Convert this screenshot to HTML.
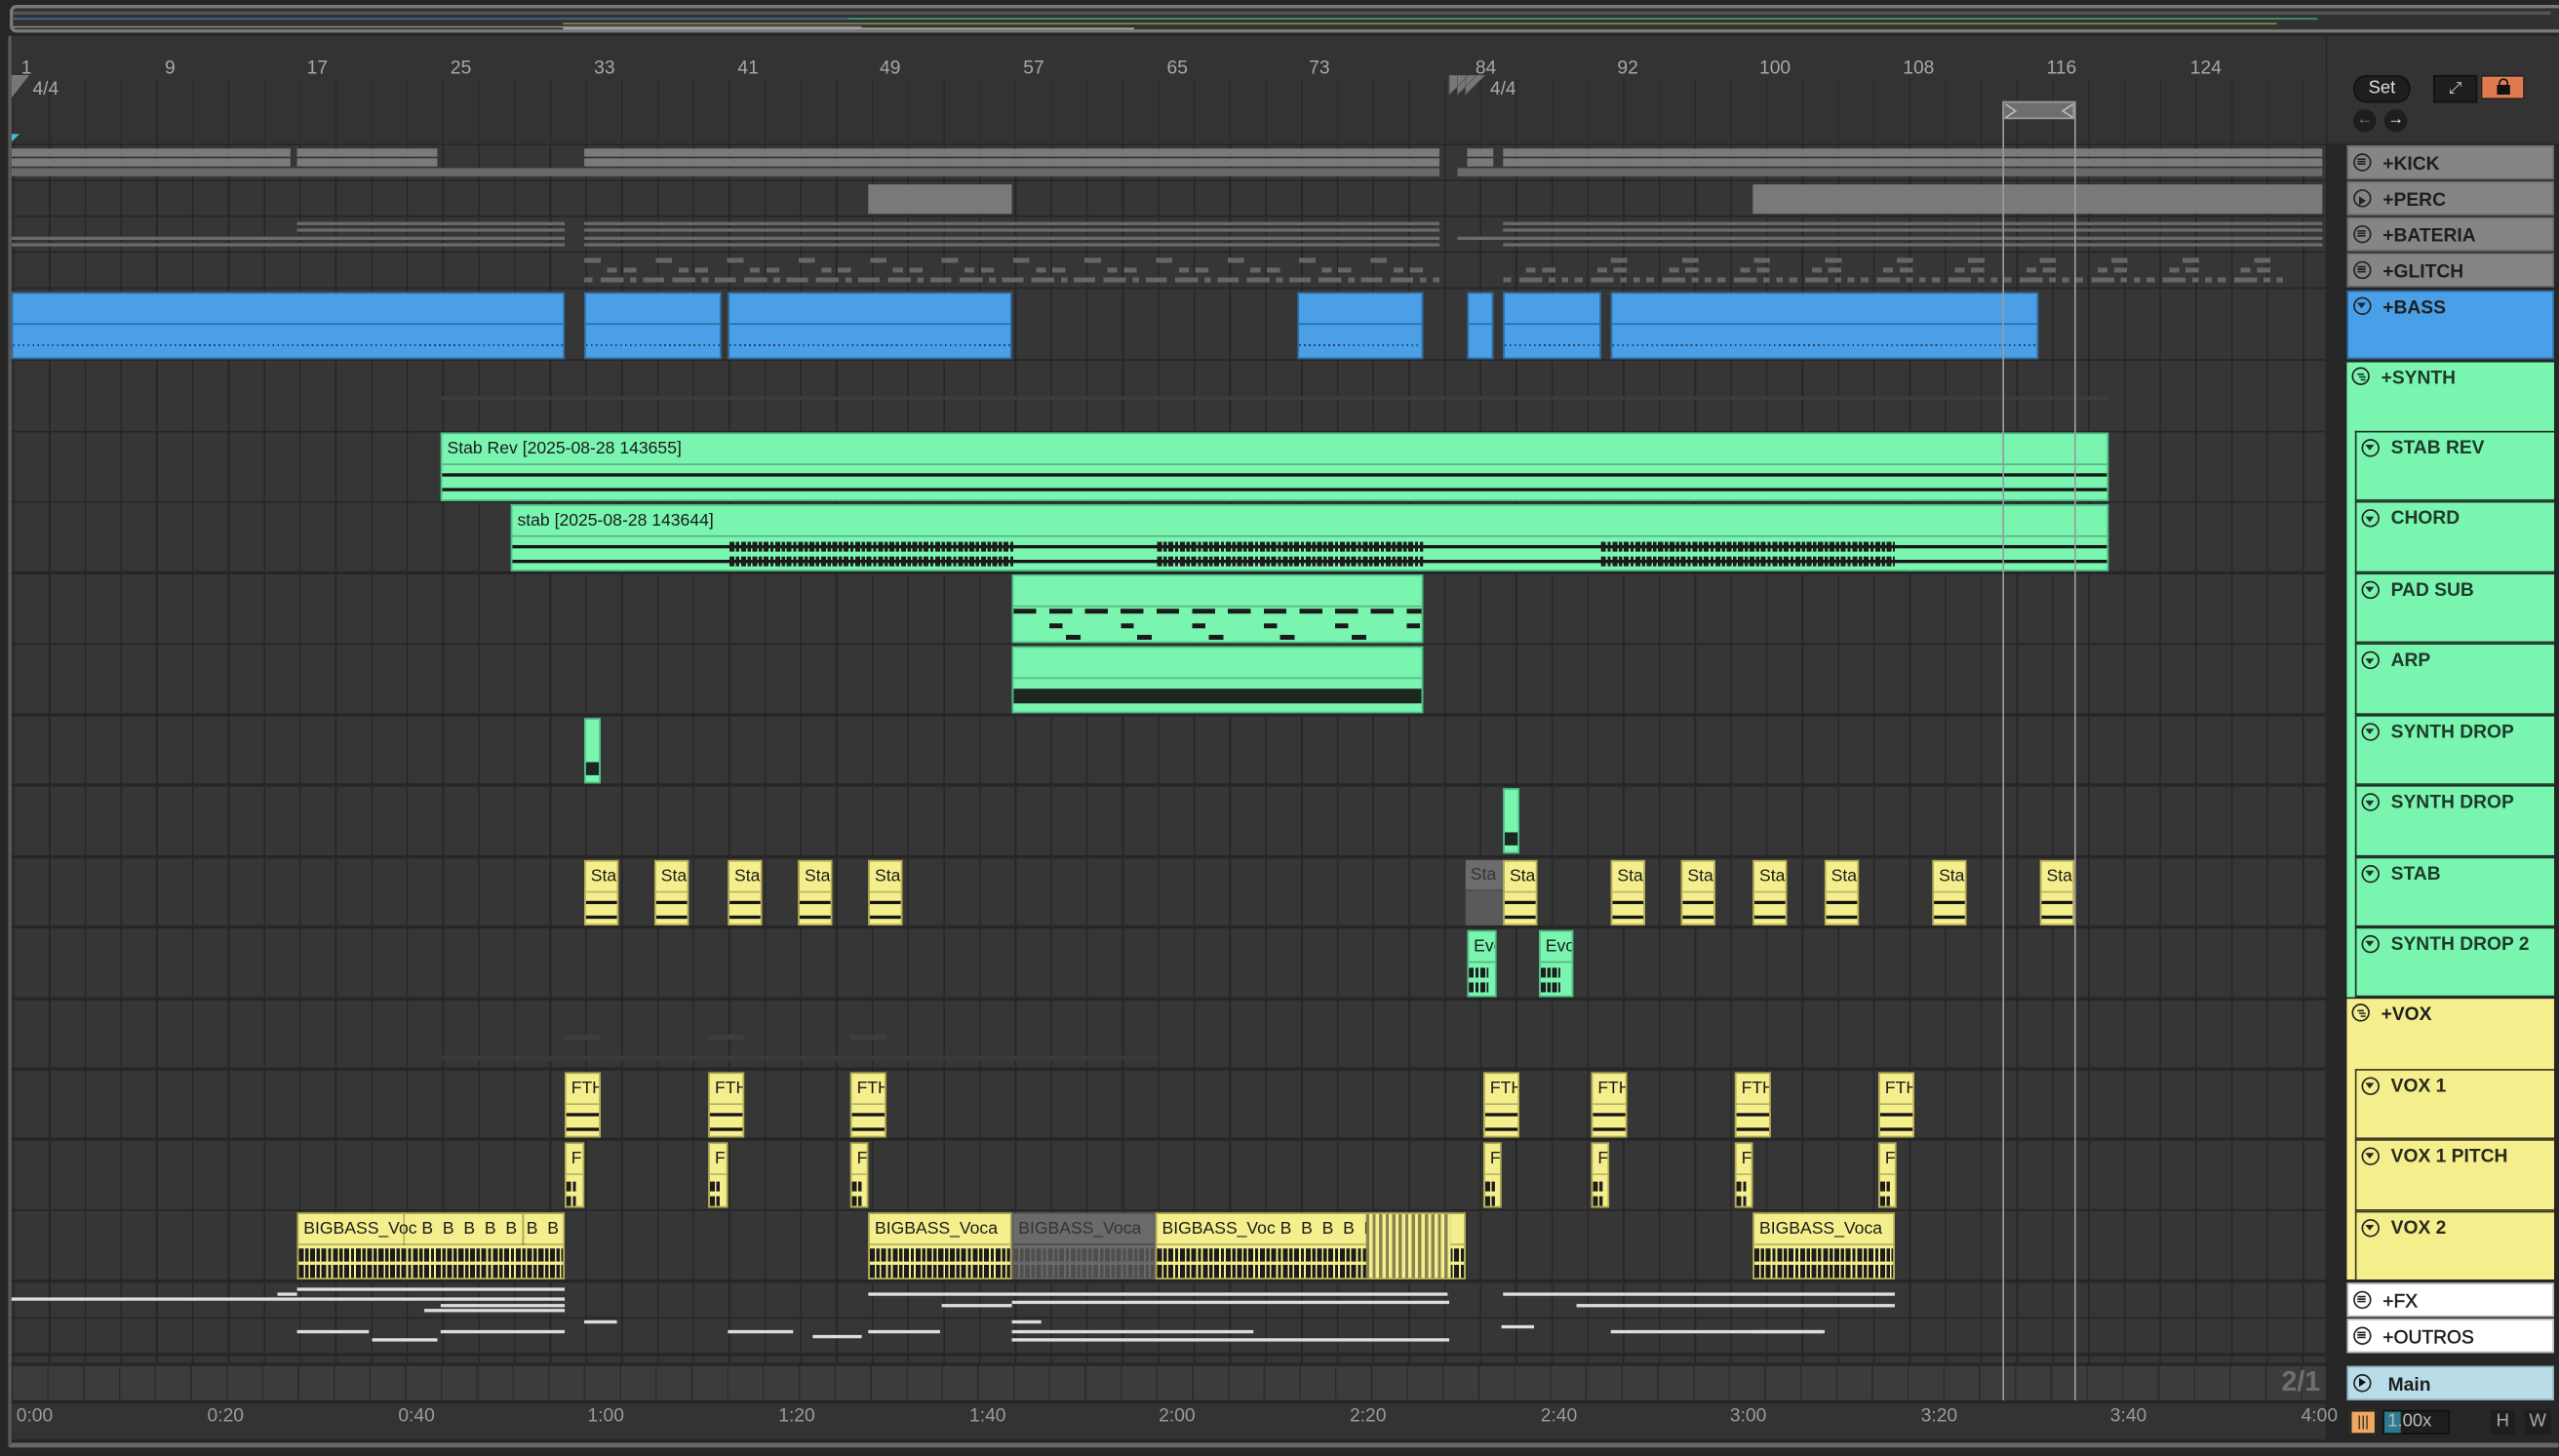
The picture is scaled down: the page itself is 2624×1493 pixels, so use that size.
<!DOCTYPE html>
<html><head><meta charset="utf-8"><style>
html,body{margin:0;padding:0;background:#262626;width:2624px;height:1492px;overflow:hidden;font-family:"Liberation Sans",sans-serif}
.s{position:absolute;left:0;top:0;width:1568px;height:892px;transform:scale(1.67347);transform-origin:0 0;background:#262626}
.a{position:absolute}
.L{position:absolute;left:7px;width:1418px;background:repeating-linear-gradient(90deg,#272727 0 1px,#363636 1px 21.92px);background-position:1px 0}
.c{position:absolute;box-sizing:border-box;overflow:hidden}
.g{background:#7af5b0;border:1px solid #4cbf88}
.y{background:#f4ef8c;border:1px solid #b3ac52}
.gy{background:#6a6a6a;border:1px solid #5a5a5a}
.b{background:#4a9fe6;border:1px solid #2e6ea5}
.h{height:18px;border-bottom:1px solid rgba(0,0,0,.25);font-size:10.5px;padding-left:3px;line-height:19px;white-space:nowrap;color:#1a1a1a}
.ln{position:absolute;left:0;right:0;height:1.5px;background:#151515}
.wv{position:absolute;left:0;right:0;height:6px;background:repeating-linear-gradient(90deg,#1c1c1c 0 3px,transparent 3px 4px,#1c1c1c 4px 6px,transparent 6px 7px)}
.k{position:absolute;background:#7a7a7a}
.w{position:absolute;height:1.5px;background:#ddd}
.hd{position:absolute;left:1438px;width:127px;box-sizing:border-box;font-weight:bold;font-size:11.5px;color:#1e1e1e;padding-left:21px;line-height:22px}
.ic{position:absolute;left:3px;top:4px;width:11px;height:11px;border:1.3px solid #222;border-radius:50%;box-sizing:border-box}
.sub{position:absolute;left:1443px;width:122px;box-sizing:border-box;border:1.5px solid #1f2f25;border-right:none;background:#7af5b0;font-weight:bold;font-size:11.5px;color:#1f3a2a;padding-left:21px;line-height:21px}
.ry{position:absolute;top:36px;font-size:11.5px;color:#a8a8a8}
.ty{position:absolute;top:862px;font-size:11.5px;color:#9a9a9a}
</style></head><body><div class="s">

<div class="a" style="left:6px;top:3px;width:1562px;height:17px;border:2px solid #7a7a7a;border-right:none;border-radius:4px 0 0 4px;background:#323232;box-sizing:border-box"></div>
<div class="a" style="left:8px;top:7px;width:1555px;height:2px;background:#555"></div>
<div class="a" style="left:8px;top:11px;width:520px;height:1px;background:#3c6f9a"></div>
<div class="a" style="left:520px;top:11px;width:900px;height:1px;background:#3aa07a"></div>
<div class="a" style="left:345px;top:14px;width:1050px;height:1px;background:#8c8a4a"></div>
<div class="a" style="left:8px;top:16px;width:520px;height:1px;background:#888"></div>
<div class="a" style="left:345px;top:17px;width:350px;height:1px;background:#aaa"></div>

<div class="a" style="left:7px;top:22px;width:1418px;height:66px;background:#333"></div>
<div class="a" style="left:7px;top:48px;width:1418px;height:40px;background:repeating-linear-gradient(90deg,#2a2a2a 0 1px,#333 1px 21.92px);background-position:1px 0"></div>
<div class="ry" style="left:13px">1</div><div class="ry" style="left:101px">9</div><div class="ry" style="left:188px">17</div><div class="ry" style="left:276px">25</div><div class="ry" style="left:364px">33</div><div class="ry" style="left:452px">41</div><div class="ry" style="left:539px">49</div><div class="ry" style="left:627px">57</div><div class="ry" style="left:715px">65</div><div class="ry" style="left:802px">73</div><div class="ry" style="left:904px">84</div><div class="ry" style="left:991px">92</div><div class="ry" style="left:1078px">100</div><div class="ry" style="left:1166px">108</div><div class="ry" style="left:1254px">116</div><div class="ry" style="left:1342px">124</div>
<div class="a" style="left:20px;top:49px;font-size:11.5px;color:#a8a8a8">4/4</div>
<div class="a" style="left:913px;top:49px;font-size:11.5px;color:#a8a8a8">4/4</div>
<svg class="a" style="left:6px;top:46px" width="14" height="16"><path d="M1 0H12L1 14Z" fill="#777"/></svg>
<svg class="a" style="left:884px;top:46px" width="30" height="16"><path d="M4 0H16L4 12ZM9 0H21L9 12ZM14 0H26L14 12Z" fill="#777" stroke="#555" stroke-width=".5"/></svg>
<svg class="a" style="left:7px;top:82px" width="6" height="6"><path d="M0 0H5L0 5Z" fill="#4ab8d8"/></svg>
<div class="a" style="left:1227px;top:62px;width:44px;height:11px;background:#6e6e6e;border:1px solid #999;box-sizing:border-box"></div>
<svg class="a" style="left:1228px;top:63px" width="43" height="10"><path d="M1 1L7 5L1 9M42 1L36 5L42 9" fill="none" stroke="#bbb" stroke-width="1"/></svg>

<div class="L" style="top:89px;height:21px"></div>
<div class="L" style="top:111px;height:21px"></div>
<div class="L" style="top:133px;height:21px"></div>
<div class="L" style="top:155px;height:21px"></div>
<div class="L" style="top:177px;height:43px"></div>
<div class="L" style="top:221px;height:43px"></div>
<div class="L" style="top:265px;height:42px"></div>
<div class="L" style="top:308px;height:42px"></div>
<div class="L" style="top:352px;height:42px"></div>
<div class="L" style="top:395px;height:42px"></div>
<div class="L" style="top:439px;height:41px"></div>
<div class="L" style="top:482px;height:42px"></div>
<div class="L" style="top:526px;height:41px"></div>
<div class="L" style="top:569px;height:42px"></div>
<div class="L" style="top:613px;height:41px"></div>
<div class="L" style="top:656px;height:41px"></div>
<div class="L" style="top:699px;height:42px"></div>
<div class="L" style="top:742px;height:42px"></div>
<div class="L" style="top:786px;height:21px"></div>
<div class="L" style="top:808px;height:21px"></div>
<div class="L" style="top:831px;height:4px"></div>
<div class="L" style="top:837px;height:21px;background:repeating-linear-gradient(90deg,#2e2e2e 0 1px,#3c3c3c 1px 21.92px)"></div>
<div class="a" style="left:1398px;top:837px;font-size:17px;font-weight:bold;color:#6f6f6f">2/1</div>

<div class="k" style="left:7px;top:91px;width:171px;height:5px"></div><div class="k" style="left:7px;top:97px;width:171px;height:5px"></div>
<div class="k" style="left:182px;top:91px;width:86px;height:5px"></div><div class="k" style="left:182px;top:97px;width:86px;height:5px"></div>
<div class="k" style="left:7px;top:103px;width:875px;height:5px;background:#6a6a6a"></div>
<div class="k" style="left:358px;top:91px;width:524px;height:5px"></div><div class="k" style="left:358px;top:97px;width:524px;height:5px"></div>
<div class="k" style="left:899px;top:91px;width:16px;height:5px"></div><div class="k" style="left:899px;top:97px;width:16px;height:5px"></div>
<div class="k" style="left:893px;top:103px;width:530px;height:5px;background:#6a6a6a"></div>
<div class="k" style="left:921px;top:91px;width:502px;height:5px"></div><div class="k" style="left:921px;top:97px;width:502px;height:5px"></div>
<div class="k" style="left:532px;top:113px;width:88px;height:18px"></div>
<div class="k" style="left:1074px;top:113px;width:349px;height:18px"></div>
<div class="k" style="left:182px;top:136px;width:164px;height:2px;background:#6a6a6a"></div><div class="k" style="left:182px;top:140px;width:164px;height:2px;background:#6a6a6a"></div>
<div class="k" style="left:7px;top:145px;width:339px;height:2px;background:#6a6a6a"></div><div class="k" style="left:7px;top:149px;width:339px;height:2px;background:#6a6a6a"></div>
<div class="k" style="left:358px;top:136px;width:524px;height:2px;background:#6a6a6a"></div><div class="k" style="left:358px;top:140px;width:524px;height:2px;background:#6a6a6a"></div>
<div class="k" style="left:358px;top:145px;width:524px;height:2px;background:#6a6a6a"></div><div class="k" style="left:358px;top:149px;width:524px;height:2px;background:#6a6a6a"></div>
<div class="k" style="left:921px;top:136px;width:502px;height:2px;background:#6a6a6a"></div><div class="k" style="left:921px;top:140px;width:502px;height:2px;background:#6a6a6a"></div>
<div class="k" style="left:893px;top:145px;width:530px;height:2px;background:#6a6a6a"></div><div class="k" style="left:921px;top:149px;width:502px;height:2px;background:#6a6a6a"></div>
<div class="k" style="left:358px;top:158px;width:524px;height:3px;background:repeating-linear-gradient(90deg,#666 0 10px,transparent 10px 43.8px)"></div>
<div class="k" style="left:372px;top:164px;width:510px;height:3px;background:repeating-linear-gradient(90deg,#666 0 6px,transparent 6px 10px,#666 10px 18px,transparent 18px 43.8px)"></div>
<div class="k" style="left:358px;top:170px;width:524px;height:3px;background:repeating-linear-gradient(90deg,#666 0 5px,transparent 5px 10px,#666 10px 24px,transparent 24px 28px,#666 28px 32px,transparent 32px 36px,#666 36px 44px,transparent 44px 43.8px)"></div>
<div class="k" style="left:987px;top:158px;width:436px;height:3px;background:repeating-linear-gradient(90deg,#666 0 10px,transparent 10px 43.8px)"></div>
<div class="k" style="left:935px;top:164px;width:460px;height:3px;background:repeating-linear-gradient(90deg,#666 0 6px,transparent 6px 10px,#666 10px 18px,transparent 18px 43.8px)"></div>
<div class="k" style="left:921px;top:170px;width:480px;height:3px;background:repeating-linear-gradient(90deg,#666 0 5px,transparent 5px 10px,#666 10px 24px,transparent 24px 28px,#666 28px 32px,transparent 32px 36px,#666 36px 40px,transparent 40px 43.8px)"></div>

<div class="c b" style="left:7px;top:179px;width:339px;height:41px"><div class="a" style="left:0;right:0;top:18px;height:1px;background:#2e6ea5"></div><div class="a" style="left:0;right:0;top:31px;height:1px;background:repeating-linear-gradient(90deg,#1b3550 0 1px,transparent 1px 3px)"></div></div>
<div class="c b" style="left:358px;top:179px;width:84px;height:41px"><div class="a" style="left:0;right:0;top:18px;height:1px;background:#2e6ea5"></div><div class="a" style="left:0;right:0;top:31px;height:1px;background:repeating-linear-gradient(90deg,#1b3550 0 1px,transparent 1px 3px)"></div></div>
<div class="c b" style="left:446px;top:179px;width:174px;height:41px"><div class="a" style="left:0;right:0;top:18px;height:1px;background:#2e6ea5"></div><div class="a" style="left:0;right:0;top:31px;height:1px;background:repeating-linear-gradient(90deg,#1b3550 0 1px,transparent 1px 3px)"></div></div>
<div class="c b" style="left:795px;top:179px;width:77px;height:41px"><div class="a" style="left:0;right:0;top:18px;height:1px;background:#2e6ea5"></div><div class="a" style="left:0;right:0;top:31px;height:1px;background:repeating-linear-gradient(90deg,#1b3550 0 1px,transparent 1px 3px)"></div></div>
<div class="c b" style="left:899px;top:179px;width:16px;height:41px"><div class="a" style="left:0;right:0;top:18px;height:1px;background:#2e6ea5"></div></div>
<div class="c b" style="left:921px;top:179px;width:60px;height:41px"><div class="a" style="left:0;right:0;top:18px;height:1px;background:#2e6ea5"></div><div class="a" style="left:0;right:0;top:31px;height:1px;background:repeating-linear-gradient(90deg,#1b3550 0 1px,transparent 1px 3px)"></div></div>
<div class="c b" style="left:987px;top:179px;width:262px;height:41px"><div class="a" style="left:0;right:0;top:18px;height:1px;background:#2e6ea5"></div><div class="a" style="left:0;right:0;top:31px;height:1px;background:repeating-linear-gradient(90deg,#1b3550 0 1px,transparent 1px 3px)"></div></div>

<div class="a" style="left:270px;top:243px;width:1022px;height:2px;background:#3d3d3d"></div>

<div class="c g" style="left:270px;top:265px;width:1022px;height:42px"><div class="h">Stab Rev [2025-08-28 143655]</div><i class="ln" style="top:24px"></i><i class="ln" style="top:33px"></i></div>
<div class="c g" style="left:313px;top:309px;width:979px;height:41px"><div class="h">stab [2025-08-28 143644]</div><i class="ln" style="top:24px"></i><i class="ln" style="top:33px"></i>
<i class="wv" style="left:133px;right:auto;width:174px;top:22px"></i><i class="wv" style="left:133px;right:auto;width:174px;top:31px"></i>
<i class="wv" style="left:395px;right:auto;width:163px;top:22px"></i><i class="wv" style="left:395px;right:auto;width:163px;top:31px"></i>
<i class="wv" style="left:667px;right:auto;width:180px;top:22px"></i><i class="wv" style="left:667px;right:auto;width:180px;top:31px"></i></div>
<div class="c g" style="left:620px;top:352px;width:252px;height:42px"><div class="h"></div>
<div class="a" style="left:0;top:20px;width:252px;height:3px;background:repeating-linear-gradient(90deg,#1a1a1a 0 14px,transparent 14px 21.9px)"></div>
<div class="a" style="left:22px;top:29px;width:230px;height:3px;background:repeating-linear-gradient(90deg,#1a1a1a 0 8px,transparent 8px 43.8px)"></div>
<div class="a" style="left:32px;top:36px;width:220px;height:3px;background:repeating-linear-gradient(90deg,#1a1a1a 0 9px,transparent 9px 43.8px)"></div></div>
<div class="c g" style="left:620px;top:396px;width:252px;height:41px"><div class="h"></div><div class="a" style="left:0;right:0;top:25px;height:9px;background:#1c2720"></div></div>
<div class="c g" style="left:358px;top:440px;width:10px;height:40px"><div class="a" style="left:0;right:0;top:26px;height:8px;background:#1c2720"></div></div>
<div class="c g" style="left:921px;top:483px;width:10px;height:40px"><div class="a" style="left:0;right:0;top:26px;height:8px;background:#1c2720"></div></div>

<div class="c y" style="left:358px;top:527px;width:21px;height:40px"><div class="h">Sta</div><i class="ln" style="top:24px"></i><i class="ln" style="top:33px"></i></div>
<div class="c y" style="left:401px;top:527px;width:21px;height:40px"><div class="h">Sta</div><i class="ln" style="top:24px"></i><i class="ln" style="top:33px"></i></div>
<div class="c y" style="left:446px;top:527px;width:21px;height:40px"><div class="h">Sta</div><i class="ln" style="top:24px"></i><i class="ln" style="top:33px"></i></div>
<div class="c y" style="left:489px;top:527px;width:21px;height:40px"><div class="h">Sta</div><i class="ln" style="top:24px"></i><i class="ln" style="top:33px"></i></div>
<div class="c y" style="left:532px;top:527px;width:21px;height:40px"><div class="h">Sta</div><i class="ln" style="top:24px"></i><i class="ln" style="top:33px"></i></div>
<div class="c" style="left:898px;top:527px;width:23px;height:40px;background:#5a5a5a"><div class="h" style="background:#6c6c6c;color:#333">Sta</div></div>
<div class="c y" style="left:921px;top:527px;width:21px;height:40px"><div class="h">Sta</div><i class="ln" style="top:24px"></i><i class="ln" style="top:33px"></i></div>
<div class="c y" style="left:987px;top:527px;width:21px;height:40px"><div class="h">Sta</div><i class="ln" style="top:24px"></i><i class="ln" style="top:33px"></i></div>
<div class="c y" style="left:1030px;top:527px;width:21px;height:40px"><div class="h">Sta</div><i class="ln" style="top:24px"></i><i class="ln" style="top:33px"></i></div>
<div class="c y" style="left:1074px;top:527px;width:21px;height:40px"><div class="h">Sta</div><i class="ln" style="top:24px"></i><i class="ln" style="top:33px"></i></div>
<div class="c y" style="left:1118px;top:527px;width:21px;height:40px"><div class="h">Sta</div><i class="ln" style="top:24px"></i><i class="ln" style="top:33px"></i></div>
<div class="c y" style="left:1184px;top:527px;width:21px;height:40px"><div class="h">Sta</div><i class="ln" style="top:24px"></i><i class="ln" style="top:33px"></i></div>
<div class="c y" style="left:1250px;top:527px;width:21px;height:40px"><div class="h">Sta</div><i class="ln" style="top:24px"></i><i class="ln" style="top:33px"></i></div>
<div class="c g" style="left:899px;top:570px;width:18px;height:41px"><div class="h">Evo</div><i class="wv" style="top:22px;width:12px"></i><i class="wv" style="top:31px;width:12px"></i></div>
<div class="c g" style="left:943px;top:570px;width:21px;height:41px"><div class="h">Evo</div><i class="wv" style="top:22px;width:12px"></i><i class="wv" style="top:31px;width:12px"></i></div>
<div class="a" style="left:346px;top:634px;width:22px;height:3px;background:#3e3e3e"></div><div class="a" style="left:434px;top:634px;width:22px;height:3px;background:#3e3e3e"></div><div class="a" style="left:521px;top:634px;width:22px;height:3px;background:#3e3e3e"></div>
<div class="a" style="left:270px;top:647px;width:440px;height:3px;background:#3a3a3a"></div>

<div class="c y" style="left:346px;top:657px;width:22px;height:40px"><div class="h">FTH</div><i class="ln" style="top:24px"></i><i class="ln" style="top:33px"></i></div>
<div class="c y" style="left:434px;top:657px;width:22px;height:40px"><div class="h">FTH</div><i class="ln" style="top:24px"></i><i class="ln" style="top:33px"></i></div>
<div class="c y" style="left:521px;top:657px;width:22px;height:40px"><div class="h">FTH</div><i class="ln" style="top:24px"></i><i class="ln" style="top:33px"></i></div>
<div class="c y" style="left:909px;top:657px;width:22px;height:40px"><div class="h">FTH</div><i class="ln" style="top:24px"></i><i class="ln" style="top:33px"></i></div>
<div class="c y" style="left:975px;top:657px;width:22px;height:40px"><div class="h">FTH</div><i class="ln" style="top:24px"></i><i class="ln" style="top:33px"></i></div>
<div class="c y" style="left:1063px;top:657px;width:22px;height:40px"><div class="h">FTH</div><i class="ln" style="top:24px"></i><i class="ln" style="top:33px"></i></div>
<div class="c y" style="left:1151px;top:657px;width:22px;height:40px"><div class="h">FTH</div><i class="ln" style="top:24px"></i><i class="ln" style="top:33px"></i></div>
<div class="c y" style="left:346px;top:700px;width:12px;height:40px"><div class="h">F</div><i class="wv" style="top:23px;width:6px"></i><i class="wv" style="top:32px;width:6px"></i></div>
<div class="c y" style="left:434px;top:700px;width:12px;height:40px"><div class="h">F</div><i class="wv" style="top:23px;width:6px"></i><i class="wv" style="top:32px;width:6px"></i></div>
<div class="c y" style="left:521px;top:700px;width:11px;height:40px"><div class="h">F</div><i class="wv" style="top:23px;width:6px"></i><i class="wv" style="top:32px;width:6px"></i></div>
<div class="c y" style="left:909px;top:700px;width:11px;height:40px"><div class="h">F</div><i class="wv" style="top:23px;width:6px"></i><i class="wv" style="top:32px;width:6px"></i></div>
<div class="c y" style="left:975px;top:700px;width:11px;height:40px"><div class="h">F</div><i class="wv" style="top:23px;width:6px"></i><i class="wv" style="top:32px;width:6px"></i></div>
<div class="c y" style="left:1063px;top:700px;width:11px;height:40px"><div class="h">F</div><i class="wv" style="top:23px;width:6px"></i><i class="wv" style="top:32px;width:6px"></i></div>
<div class="c y" style="left:1151px;top:700px;width:11px;height:40px"><div class="h">F</div><i class="wv" style="top:23px;width:6px"></i><i class="wv" style="top:32px;width:6px"></i></div>
<div class="c y" style="left:182px;top:743px;width:164px;height:41px"><div class="h" style="background:repeating-linear-gradient(90deg,transparent 0 64px,#b3ac52 64px 65px,transparent 65px 73px)">BIGBASS_Voc&nbsp;B&nbsp; B&nbsp; B&nbsp; B&nbsp; B&nbsp; B&nbsp; B&nbsp; B</div><i class="wv" style="top:21px;height:8px"></i><i class="wv" style="top:31px;height:8px"></i></div>
<div class="c y" style="left:532px;top:743px;width:88px;height:41px"><div class="h">BIGBASS_Voca</div><i class="wv" style="top:21px;height:8px"></i><i class="wv" style="top:31px;height:8px"></i></div>
<div class="c gy" style="left:620px;top:743px;width:88px;height:41px"><div class="h" style="color:#333">BIGBASS_Voca</div><i class="wv" style="top:21px;height:8px;opacity:.35"></i><i class="wv" style="top:31px;height:8px;opacity:.35"></i></div>
<div class="c y" style="left:708px;top:743px;width:190px;height:41px"><div class="h">BIGBASS_Voc&nbsp;B&nbsp; B&nbsp; B&nbsp; B&nbsp; B</div><i class="wv" style="top:21px;height:8px"></i><i class="wv" style="top:31px;height:8px"></i>
<div class="a" style="left:128px;top:0;width:52px;height:41px;background:repeating-linear-gradient(90deg,#8a8550 0 2px,#f4ef8c 2px 4px)"></div></div>
<div class="c y" style="left:1074px;top:743px;width:87px;height:41px"><div class="h">BIGBASS_Voca</div><i class="wv" style="top:21px;height:8px"></i><i class="wv" style="top:31px;height:8px"></i></div>

<div class="w" style="left:182px;top:789px;width:164px"></div>
<div class="w" style="left:7px;top:795px;width:339px"></div>
<div class="w" style="left:170px;top:792px;width:12px"></div>
<div class="w" style="left:270px;top:799px;width:76px"></div>
<div class="w" style="left:260px;top:802px;width:86px"></div>
<div class="w" style="left:532px;top:792px;width:355px"></div>
<div class="w" style="left:620px;top:797px;width:268px"></div>
<div class="w" style="left:577px;top:799px;width:43px"></div>
<div class="w" style="left:921px;top:792px;width:240px"></div>
<div class="w" style="left:966px;top:799px;width:195px"></div>
<div class="w" style="left:182px;top:815px;width:44px"></div>
<div class="w" style="left:270px;top:815px;width:76px"></div>
<div class="w" style="left:228px;top:820px;width:40px"></div>
<div class="w" style="left:358px;top:809px;width:20px"></div>
<div class="w" style="left:446px;top:815px;width:40px"></div>
<div class="w" style="left:498px;top:818px;width:30px"></div>
<div class="w" style="left:532px;top:815px;width:44px"></div>
<div class="w" style="left:620px;top:809px;width:18px"></div>
<div class="w" style="left:620px;top:815px;width:90px"></div>
<div class="w" style="left:620px;top:820px;width:268px"></div>
<div class="w" style="left:708px;top:815px;width:60px"></div>
<div class="w" style="left:920px;top:812px;width:20px"></div>
<div class="w" style="left:987px;top:815px;width:130px"></div>
<div class="w" style="left:1074px;top:815px;width:44px"></div>

<div class="a" style="left:1227px;top:62px;width:1px;height:796px;background:#9a9a9a"></div>
<div class="a" style="left:1271px;top:62px;width:1px;height:796px;background:#9a9a9a"></div>

<div class="a" style="left:7px;top:860px;width:1418px;height:22px;background:#333"></div>
<div class="ty" style="left:10px">0:00</div><div class="ty" style="left:127px">0:20</div><div class="ty" style="left:244px">0:40</div><div class="ty" style="left:360px">1:00</div><div class="ty" style="left:477px">1:20</div><div class="ty" style="left:594px">1:40</div><div class="ty" style="left:710px">2:00</div><div class="ty" style="left:827px">2:20</div><div class="ty" style="left:944px">2:40</div><div class="ty" style="left:1060px">3:00</div><div class="ty" style="left:1177px">3:20</div><div class="ty" style="left:1293px">3:40</div><div class="ty" style="left:1410px">4:00</div>
<div class="a" style="left:5px;top:884px;width:1563px;height:3px;background:#666;border-radius:2px"></div>
<div class="a" style="left:5px;top:22px;width:2px;height:864px;background:#5a5a5a"></div>

<div class="a" style="left:1426px;top:22px;width:142px;height:66px;background:#333"></div>
<div class="a" style="left:1442px;top:46px;width:33px;height:15px;border-radius:8px;background:#1e1e1e;border:1px solid #111;color:#ddd;font-size:11px;text-align:center;line-height:15px">Set</div>
<div class="a" style="left:1491px;top:46px;width:25px;height:15px;background:#1e1e1e;border:1px solid #111;color:#ddd;font-size:10px;text-align:center;line-height:15px">⤢</div>
<div class="a" style="left:1520px;top:46px;width:27px;height:15px;background:#e07a50;border:1px solid #222;box-sizing:border-box"><div class="a" style="left:9px;top:5px;width:8px;height:6px;background:#111"></div><div class="a" style="left:10px;top:1px;width:4px;height:5px;border:1.5px solid #111;border-bottom:none;border-radius:3px 3px 0 0"></div></div>
<div class="a" style="left:1442px;top:67px;width:14px;height:14px;border-radius:50%;background:#1e1e1e;color:#777;font-size:10px;text-align:center;line-height:14px">←</div>
<div class="a" style="left:1461px;top:67px;width:14px;height:14px;border-radius:50%;background:#1e1e1e;color:#eee;font-size:10px;text-align:center;line-height:14px">→</div>

<div class="hd" style="top:89px;height:21px;background:#858585;border:1px solid #6b6b6b"><div class="ic"></div>+KICK</div>
<div class="hd" style="top:111px;height:21px;background:#858585;border:1px solid #6b6b6b"><div class="ic"></div>+PERC</div>
<div class="hd" style="top:133px;height:21px;background:#858585;border:1px solid #6b6b6b"><div class="ic"></div>+BATERIA</div>
<div class="hd" style="top:155px;height:21px;background:#858585;border:1px solid #6b6b6b"><div class="ic"></div>+GLITCH</div>
<div class="hd" style="top:178px;height:42px;background:#4aa0e8;border:1px solid #2e6ea5;line-height:20px"><div class="ic" style="top:3px"></div>+BASS</div>
<div class="hd" style="top:222px;height:389px;background:#7af5b0;line-height:20px;color:#1f3a2a"><div class="ic" style="top:3px"></div>+SYNTH</div>
<div class="sub" style="top:264px;height:43px"><div class="ic" style="top:4px"></div>STAB REV</div>
<div class="sub" style="top:307px;height:44px"><div class="ic" style="top:4px"></div>CHORD</div>
<div class="sub" style="top:351px;height:43px"><div class="ic" style="top:4px"></div>PAD SUB</div>
<div class="sub" style="top:394px;height:44px"><div class="ic" style="top:4px"></div>ARP</div>
<div class="sub" style="top:438px;height:43px"><div class="ic" style="top:4px"></div>SYNTH DROP</div>
<div class="sub" style="top:481px;height:44px"><div class="ic" style="top:4px"></div>SYNTH DROP</div>
<div class="sub" style="top:525px;height:43px"><div class="ic" style="top:4px"></div>STAB</div>
<div class="sub" style="top:568px;height:43px"><div class="ic" style="top:4px"></div>SYNTH DROP 2</div>
<div class="hd" style="top:612px;height:172px;background:#f4ef8c;line-height:20px"><div class="ic" style="top:3px"></div>+VOX</div>
<div class="sub" style="top:655px;height:43px;background:#f4ef8c;border-color:#3a3820;color:#2a2a1a"><div class="ic" style="top:4px"></div>VOX 1</div>
<div class="sub" style="top:698px;height:44px;background:#f4ef8c;border-color:#3a3820;color:#2a2a1a"><div class="ic" style="top:4px"></div>VOX 1 PITCH</div>
<div class="sub" style="top:742px;height:42px;background:#f4ef8c;border-color:#3a3820;border-bottom:none;color:#2a2a1a"><div class="ic" style="top:4px"></div>VOX 2</div>
<div class="hd" style="top:786px;height:21px;background:#fff;border:1px solid #bbb;font-weight:normal;-webkit-text-stroke:.3px #222"><div class="ic"></div>+FX</div>
<div class="hd" style="top:808px;height:21px;background:#fff;border:1px solid #bbb;font-weight:normal;-webkit-text-stroke:.3px #222"><div class="ic"></div>+OUTROS</div>
<div class="hd" style="top:837px;height:21px;background:#b8dce8;border:1px solid #8fb3c0"><div class="ic"></div>&nbsp;Main</div>
<svg class="a" style="left:1441px;top:117px" width="12" height="12"><path d="M4.5 3.3V8.7L8.7 6Z" fill="#222"/></svg>
<svg class="a" style="left:1441px;top:841px" width="12" height="12"><path d="M4.5 3.3V8.7L8.7 6Z" fill="#111"/></svg>
<svg class="a" style="left:1441px;top:93px" width="12" height="80"><g stroke="#222" stroke-width="1"><path d="M3.5 4.5H8.5M3.5 6H8.5M3.5 7.5H8.5"/><path d="M3.5 48.5H8.5M3.5 50H8.5M3.5 51.5H8.5"/><path d="M3.5 70.5H8.5M3.5 72H8.5M3.5 73.5H8.5"/></g></svg>
<svg class="a" style="left:1441px;top:181px" width="12" height="12"><path d="M3.3 4.5H8.7L6 8Z" fill="#1a2a3a"/></svg>
<svg class="a" style="left:1441px;top:225px" width="12" height="12"><path d="M3.5 4.3H7.5M4.5 6H8.5M5.5 7.7H8.5" stroke="#1f3a2a" stroke-width="1"/></svg>
<svg class="a" style="left:1441px;top:615px" width="12" height="12"><path d="M3.5 4.3H7.5M4.5 6H8.5M5.5 7.7H8.5" stroke="#333" stroke-width="1"/></svg>
<svg class="a" style="left:1446px;top:268px" width="12" height="320"><g fill="#1f3a2a"><path d="M3.3 4.5H8.7L6 8Z"/><path d="M3.3 48.5H8.7L6 52Z"/><path d="M3.3 91.5H8.7L6 95Z"/><path d="M3.3 135.5H8.7L6 139Z"/><path d="M3.3 178.5H8.7L6 182Z"/><path d="M3.3 222.5H8.7L6 226Z"/><path d="M3.3 265.5H8.7L6 269Z"/><path d="M3.3 308.5H8.7L6 312Z"/></g></svg>
<svg class="a" style="left:1446px;top:659px" width="12" height="100"><g fill="#2a2a1a"><path d="M3.3 4.5H8.7L6 8Z"/><path d="M3.3 47.5H8.7L6 51Z"/><path d="M3.3 91.5H8.7L6 95Z"/></g></svg>
<svg class="a" style="left:1441px;top:790px" width="12" height="40"><g stroke="#222" stroke-width="1"><path d="M3.5 4.5H8.5M3.5 6H8.5M3.5 7.5H8.5"/><path d="M3.5 26.5H8.5M3.5 28H8.5M3.5 29.5H8.5"/></g></svg>

<div class="a" style="left:1440px;top:864px;width:16px;height:15px;background:#f0a860;border:1px solid #222;box-sizing:border-box;font-size:9px;text-align:center;line-height:13px;color:#222">|||</div>
<div class="a" style="left:1460px;top:864px;width:41px;height:15px;background:#1e1e1e;border:1px solid #111;box-sizing:border-box"><div class="a" style="left:0;top:0;width:10px;height:13px;background:#2e7a90"></div><div class="a" style="left:2px;top:0;font-size:11px;color:#bbb;line-height:13px">1.00x</div></div>
<div class="a" style="left:1526px;top:864px;width:15px;height:15px;background:#1e1e1e;color:#aaa;font-size:11px;text-align:center;line-height:15px">H</div>
<div class="a" style="left:1547px;top:864px;width:16px;height:15px;background:#1e1e1e;color:#aaa;font-size:11px;text-align:center;line-height:15px">W</div>
</div></body></html>
